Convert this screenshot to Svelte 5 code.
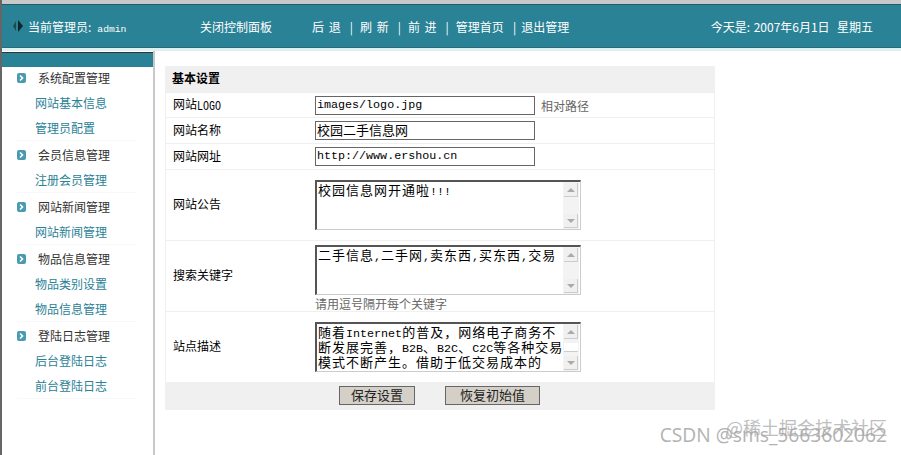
<script>
	const menu = [
		{ title: '系统配置管理', links: ['网站基本信息', '管理员配置'] },
		{ title: '会员信息管理', links: ['注册会员管理'] },
		{ title: '网站新闻管理', links: ['网站新闻管理'] },
		{ title: '物品信息管理', links: ['物品类别设置', '物品信息管理'] },
		{ title: '登陆日志管理', links: ['后台登陆日志', '前台登陆日志'] }
	];
	const nav = ['后 退', '刷 新', '前 进', '管理首页', '退出管理'];
</script>

<div class="page">
	<header class="top">
		<svg class="toggle" width="10" height="12" viewBox="0 0 10 12">
			<path d="M3 1v10L0 6z" fill="#1d4a55" />
			<path d="M5 0v12l5-6z" fill="#10242a" />
		</svg>
		<div class="admin">当前管理员:<span class="name">admin</span></div>
		<div class="close">关闭控制面板</div>
		<nav class="nav">
			{#each nav as item, i}
				{#if i > 0}<span class="sep">|</span>{/if}
				<span class="nav-item">{item}</span>
			{/each}
		</nav>
		<div class="today">今天是: 2007年6月1日&nbsp; 星期五</div>
	</header>

	<div class="body">
		<aside class="side">
			<div class="side-bar"></div>
			{#each menu as group}
				<section class="group">
					<div class="row head">
						<svg class="bullet" width="9" height="10" viewBox="0 0 9 10">
							<rect width="9" height="10" rx="2" fill="#4a9ab2" />
							<path d="M3 2.5 5.5 5 3 7.5" fill="none" stroke="#fff" stroke-width="1.6" />
						</svg>
						<span>{group.title}</span>
					</div>
					{#each group.links as link}
						<div class="row link">{link}</div>
					{/each}
				</section>
			{/each}
		</aside>

		<main class="main">
			<div class="panel">
				<div class="panel-title">基本设置</div>

				<div class="field h25">
					<div class="label">网站<span class="logo">LOGO</span></div>
					<div class="input mono">images/logo.jpg</div>
					<span class="hint side-hint">相对路径</span>
				</div>
				<div class="field h26">
					<div class="label">网站名称</div>
					<div class="input">校园二手信息网</div>
				</div>
				<div class="field h26">
					<div class="label">网站网址</div>
					<div class="input mono">http://www.ershou.cn</div>
				</div>

				<div class="field h71">
					<div class="label">网站公告</div>
					<div class="control">
						<div class="area">
							<div class="area-text">校园信息网开通啦<span class="en">!!!</span></div>
							<div class="scroll">
								<span class="btn"><i class="up"></i></span>
								<span class="btn"><i class="down"></i></span>
							</div>
						</div>
					</div>
				</div>

				<div class="field h71">
					<div class="label">搜索关键字</div>
					<div class="control keywords">
						<div class="area">
							<div class="area-text">二手信息<span class="en">,</span>二手网<span class="en">,</span>卖东西<span class="en">,</span>买东西<span class="en">,</span>交易</div>
							<div class="scroll">
								<span class="btn"><i class="up"></i></span>
								<span class="btn"><i class="down"></i></span>
							</div>
						</div>
						<div class="hint">请用逗号隔开每个关键字</div>
					</div>
				</div>

				<div class="field h70 last">
					<div class="label">站点描述</div>
					<div class="control">
						<div class="area">
							<div class="area-text">随着<span class="en">Internet</span>的普及，网络电子商务不<br />断发展完善，<span class="en">B2B</span>、<span class="en">B2C</span>、<span class="en">C2C</span>等各种交易<br />模式不断产生。借助于低交易成本的<br />&emsp;&emsp;&emsp;&emsp;&emsp;&emsp;优势和方便快捷的特点</div>
							<div class="scroll">
								<span class="btn"><i class="up"></i></span>
								<span class="thumb"></span>
								<span class="btn"><i class="down"></i></span>
							</div>
						</div>
					</div>
				</div>

				<div class="panel-foot">
					<button class="save">保存设置</button>
					<button class="reset">恢复初始值</button>
				</div>
			</div>
		</main>
	</div>

	<div class="mark">
		<span class="mark-a">CSDN @sms_5663602062</span>
		<span class="mark-b">@稀土掘金技术社区</span>
	</div>
</div>

<style>
	:global(body) {
		background: #fff;
		overflow: hidden;
	}

	.page {
		position: relative;
		width: 901px;
		height: 455px;
		overflow: hidden;
		font-family: 'Noto Sans CJK SC', 'Liberation Sans', sans-serif;
		font-size: 12px;
		color: #000;
		background: #fff;
		border-left: 2px solid #666;
		box-sizing: border-box;
	}

	.top {
		display: flex;
		align-items: center;
		box-sizing: border-box;
		height: 51px;
		margin-left: -2px;
		padding: 0 0 0 13px;
		background: #2a8296;
		background-clip: padding-box;
		border-top: 4px solid #c9c9c9;
		border-bottom: 3px solid #dff0f0;
		box-shadow: inset 0 1px 0 #2a5a66, inset 0 -1px 0 #2b6a78;
		color: #fff;
	}

	.toggle {
		flex: none;
		margin-right: 5px;
	}

	.admin {
		width: 172px;
		white-space: nowrap;
	}

	.name {
		margin-left: 6px;
		font-family: 'Liberation Mono', monospace;
		font-size: 9.7px;
	}

	.close {
		width: 112px;
		white-space: nowrap;
	}

	.nav {
		display: flex;
		align-items: center;
		gap: 8px;
		white-space: pre;
		word-spacing: 2px;
	}

	.nav-item {
		display: block;
	}

	.nav-item:last-child {
		margin-left: -2px;
	}

	.sep {
		margin: 0 -1px 0 1px;
	}

	.today {
		margin-left: auto;
		padding-right: 28px;
		white-space: nowrap;
		word-spacing: 1px;
	}

	.body {
		display: flex;
		align-items: flex-start;
		height: 404px;
	}

	.side {
		flex: none;
		box-sizing: border-box;
		width: 153px;
		height: 404px;
		padding-top: 1px;
		border-right: 2px solid #c8c8c8;
	}

	.side-bar {
		height: 15px;
		background: #2a8296;
		border-top: 1px solid #333;
		box-sizing: border-box;
	}

	.group {
		display: flex;
		flex-direction: column;
		gap: 4px;
		margin: 0 16px 3px 15px;
		padding-bottom: 2px;
		border-bottom: 1px solid #f8f8f8;
	}

	.row {
		display: flex;
		align-items: center;
		height: 21px;
		white-space: nowrap;
	}

	.head {
		color: #333;
	}

	.bullet {
		flex: none;
		margin-right: 12px;
	}

	.link {
		padding-left: 18px;
		color: #2a8296;
	}

	.main {
		flex: 1;
		padding: 15px 0 0 10px;
	}

	.panel {
		width: 550px;
		box-sizing: border-box;
	}

	.panel-title {
		height: 27px;
		line-height: 24px;
		padding-left: 7px;
		font-weight: 700;
		background: #f0f0f0;
	}

	.field {
		display: flex;
		align-items: center;
		box-sizing: border-box;
		padding-left: 7px;
		border-left: 1px solid #f0f0f0;
		border-right: 1px solid #f0f0f0;
		border-bottom: 1px solid #f0f0f0;
	}

	.field.last {
		border-bottom: none;
	}

	.h25 {
		height: 25px;
	}

	.h26 {
		height: 26px;
	}

	.h71 {
		height: 71px;
	}

	.h70 {
		height: 70px;
	}

	.label {
		flex: none;
		width: 142px;
		padding-bottom: 3px;
	}

	/* the original LOGO is tall and narrow */
	.logo {
		display: inline-block;
		font-family: 'Liberation Mono', monospace;
		font-size: 10px;
		transform: scaleY(1.3);
	}

	.input {
		flex: none;
		box-sizing: border-box;
		width: 220px;
		height: 19px;
		padding-left: 1px;
		line-height: 16px;
		font-size: 13px;
		background: #fff;
		border: 1px solid #666;
		white-space: nowrap;
	}

	.mono {
		font-family: 'Liberation Mono', monospace;
		font-size: 11.7px;
		line-height: 17px;
	}

	.hint {
		color: #666;
	}

	.side-hint {
		margin-left: 6px;
	}

	.control {
		flex: none;
	}

	.keywords {
		padding-top: 5px;
	}

	.area {
		display: flex;
		box-sizing: border-box;
		width: 266px;
		height: 50px;
		overflow: hidden;
		background: #fff;
		border-top: 2px solid #555;
		border-left: 2px solid #555;
		border-right: 1px solid #ccc;
		border-bottom: 1px solid #ccc;
	}

	.area-text {
		flex: 1;
		padding-left: 1px;
		font-size: 13px;
		letter-spacing: 1px;
		line-height: 15px;
		white-space: nowrap;
		overflow: hidden;
	}

	.en {
		font-family: 'Liberation Mono', monospace;
		font-size: 11.7px;
		letter-spacing: 0;
		line-height: 0;
	}

	.scroll {
		flex: none;
		display: flex;
		flex-direction: column;
		justify-content: space-between;
		box-sizing: border-box;
		width: 16px;
		margin-right: 1px;
		padding: 1px;
		background: #f3f3f3;
	}

	.btn {
		display: flex;
		align-items: center;
		justify-content: center;
		height: 13px;
		background: #f0f0f0;
		border-right: 1px solid #ccc;
		border-bottom: 1px solid #ccc;
	}

	.thumb {
		height: 8px;
		background: #fff;
		border-bottom: 1px solid #ccc;
	}

	.up,
	.down {
		width: 0;
		height: 0;
		border-left: 4px solid transparent;
		border-right: 4px solid transparent;
	}

	.up {
		border-bottom: 4px solid #aaa;
	}

	.down {
		border-top: 4px solid #aaa;
	}

	.panel-foot {
		display: flex;
		gap: 30px;
		height: 28px;
		padding: 4px 0 0 174px;
		box-sizing: border-box;
		background: #f0f0f0;
	}

	button {
		box-sizing: border-box;
		height: 19px;
		padding: 0 0 2px;
		font: 13px/15px 'Noto Sans CJK SC', sans-serif;
		color: #222;
		background: #d4d0c8;
		border: 1px solid #666;
	}

	.save {
		width: 76px;
	}

	.reset {
		width: 95px;
	}

	.mark {
		position: absolute;
		right: 14px;
		bottom: 8px;
		width: 226px;
		height: 32px;
		color: #a5a5a5;
		white-space: nowrap;
	}

	.mark-a {
		position: absolute;
		right: 0;
		bottom: 0;
		font-family: 'Open Sans', sans-serif;
		font-size: 19.2px;
		line-height: 24px;
		opacity: 0.85;
	}

	.mark-b {
		position: absolute;
		right: 0;
		top: 2px;
		font-size: 18px;
		line-height: 20px;
		opacity: 0.7;
	}
</style>
